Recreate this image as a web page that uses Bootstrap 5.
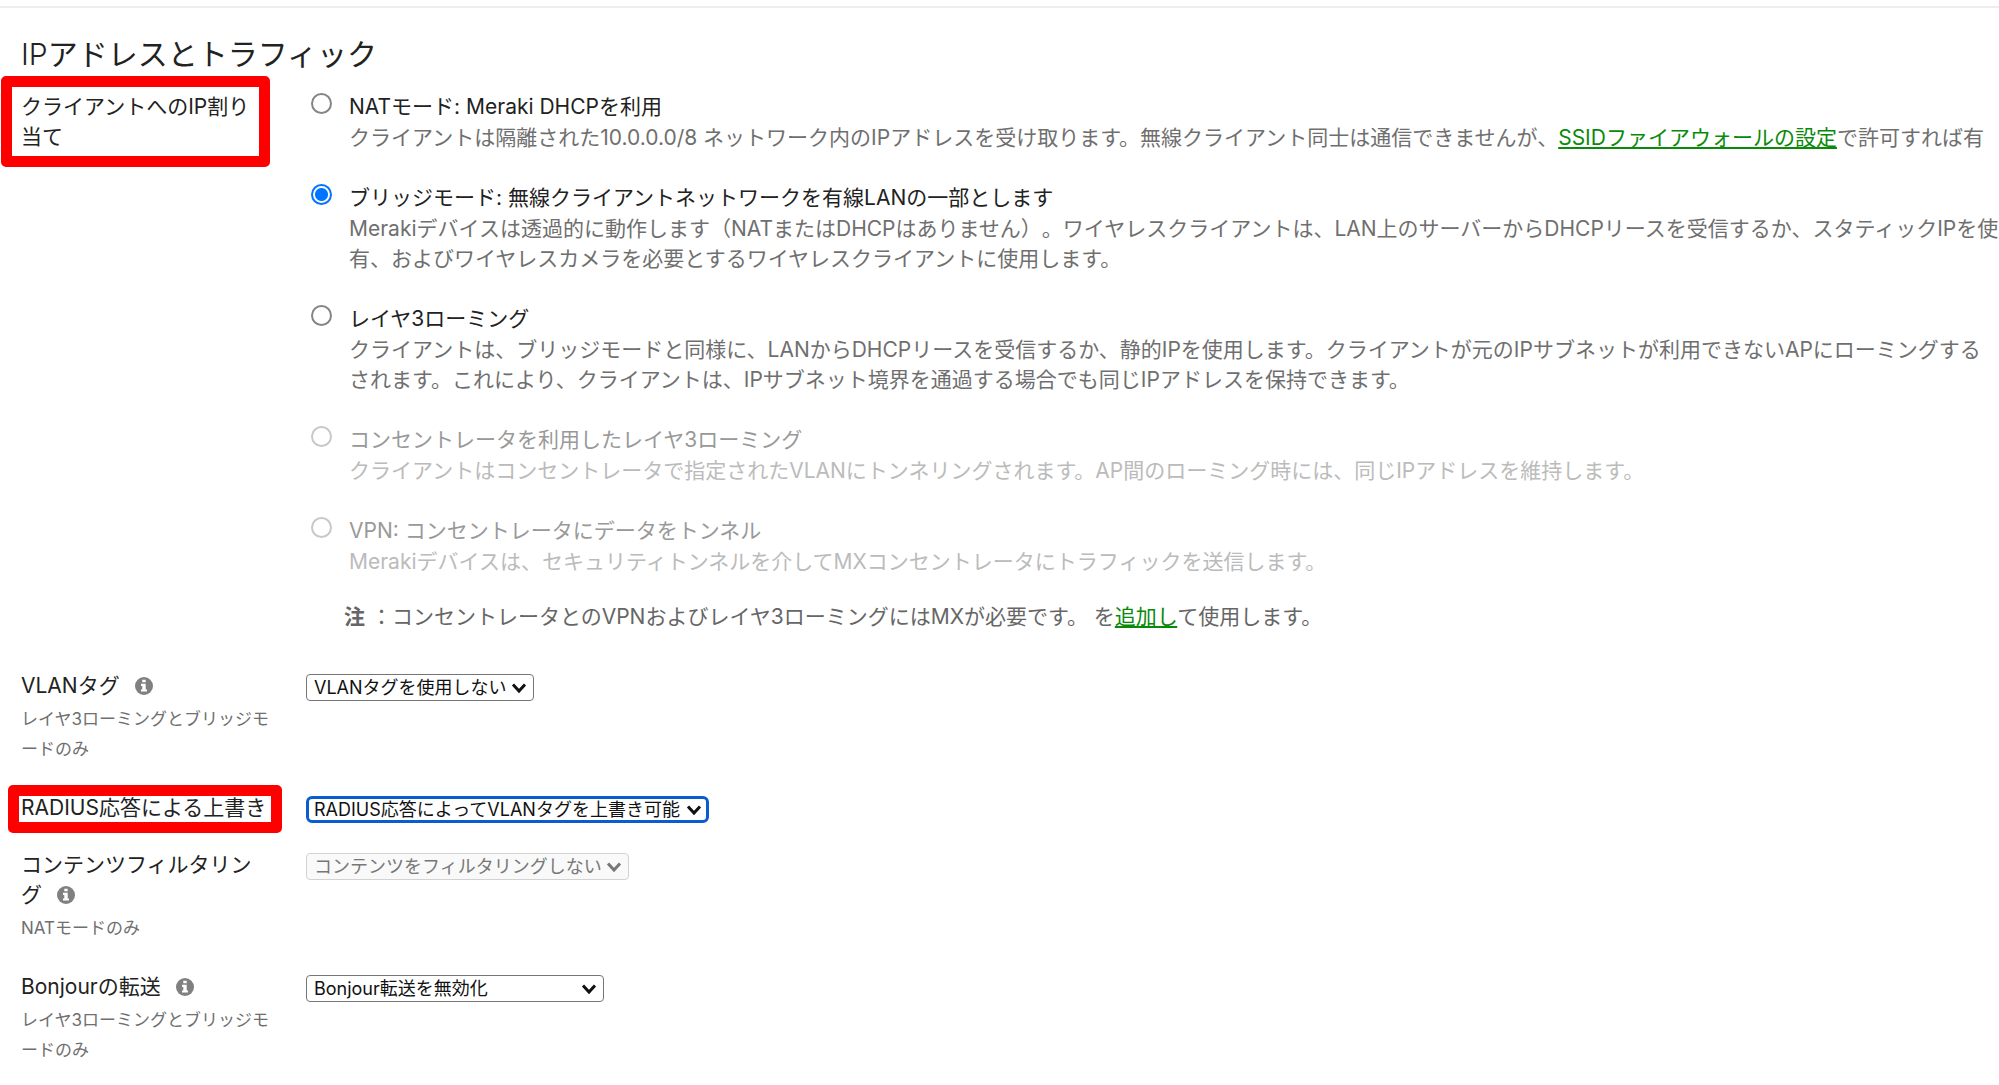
<!DOCTYPE html>
<html lang="ja">
<head>
<meta charset="utf-8">
<meta name="viewport" content="width=device-width, initial-scale=1">
<title>IPアドレスとトラフィック</title>
<link href="https://cdn.jsdelivr.net/npm/bootstrap@5.3.0/dist/css/bootstrap.min.css" rel="stylesheet">
<style>
  body { font-family: Inter, "Noto Sans CJK JP", sans-serif; font-size: 21px; line-height: 30px; color: #222; background: #fff; overflow-x: hidden; text-spacing-trim: space-all; }
  .page-body { border-top: 2px solid #eee; margin-top: 6px; padding: 26px 0 0 21px; }
  .section-title { font-size: 30px; font-weight: 400; line-height: 40px; margin: 0 0 18px; }
  .setting { gap: 36px; margin-bottom: 27px; }
  .setting-name { width: 249px; line-break: anywhere; word-break: break-all; }
  .hint { font-size: 17px; color: #6f6f6f; margin: 3px 0 2px; }
  .marked::after { content: ""; position: absolute; border: 11px solid #f00; border-radius: 5px; pointer-events: none; }
  .marked-block::after { inset: -16px 0 -15px -20px; }
  .marked-line::after { inset: -8px -12px -10px -13px; }
  .info-icon { width: 18px; height: 18px; margin-left: 15px; vertical-align: -2px; }
  .choices { padding-left: 5px; }
  .choice { padding-left: 38px; margin-bottom: 30px; min-height: 0; white-space: nowrap; }
  .choice .form-check-input { width: 21px; height: 21px; margin: 1px 0 0 -38px; border: 2px solid #858585; background-color: #fff; }
  .choice .form-check-input:checked { border-color: #0075ff; background-image: radial-gradient(circle, #0075ff 6px, #fff 7px); }
  .choice .form-check-input:disabled { border-color: #c8c8c8; opacity: 1; }
  .choice .form-check-label { display: block; }
  .choice p { color: #6f6f6f; margin: 1px 0 0; }
  .choice .form-check-input:disabled ~ .form-check-label { color: #999; opacity: 1; }
  .choice .form-check-input:disabled ~ p { color: #bbb; }
  .note { color: #666; margin: -5px 0 0 33px; }
  .green-link { color: #0a8a0a; text-decoration: underline; }
  .vlan-row { padding-top: 12px; }
  .picker { appearance: none; font-size: 18px; line-height: 24px; height: 27px; margin-top: 3px; padding: 0 26px 0 7px; border: 1px solid #767676; border-radius: 4px; color: #111; background: #fff url("data:image/svg+xml,%3Csvg xmlns='http://www.w3.org/2000/svg' viewBox='0 0 16 12'%3E%3Cpath d='M2 2.5 8 9l6-6.5' fill='none' stroke='%23111' stroke-width='3'/%3E%3C/svg%3E") no-repeat right 6px center / 16px 12px; }
  .picker.is-current { border: 3px solid #0b5cce; border-radius: 6px; padding: 0 24px 0 5px; line-height: 20px; background-position: right 4px center; outline: 0; }
  .picker:disabled { color: #777; border-color: #d2d2d2; background-color: #f9f9f9; opacity: 1; background-image: url("data:image/svg+xml,%3Csvg xmlns='http://www.w3.org/2000/svg' viewBox='0 0 16 12'%3E%3Cpath d='M2 2.5 8 9l6-6.5' fill='none' stroke='%23777' stroke-width='3'/%3E%3C/svg%3E"); }
  .picker-wide { width: 298px; }
</style>
<script src="https://cdn.jsdelivr.net/npm/bootstrap@5.3.0/dist/js/bootstrap.bundle.min.js"></script>
</head>
<body>
<svg class="d-none" xmlns="http://www.w3.org/2000/svg">
  <symbol id="info" viewBox="0 0 18 18">
    <circle cx="9" cy="9" r="9" fill="#808080"/>
    <path d="M7.3 2.7h3.4v2.6H7.3zM6 6.8h4.7v5.6H12v2.1H6v-2.1h1.3V8.9H6z" fill="#fff"/>
  </symbol>
</svg>
<main class="page-body">
  <h1 class="section-title"><span class="fw-light">IP</span>アドレスとトラフィック</h1>

  <div class="setting d-flex align-items-start">
    <div class="setting-name flex-shrink-0 position-relative marked marked-block" id="ip-label">クライアントへのIP割り当て</div>
    <div class="choices flex-grow-1" role="radiogroup" aria-labelledby="ip-label">
      <div class="choice form-check">
        <input class="form-check-input" type="radio" name="ip" id="nat">
        <label class="form-check-label" for="nat">NATモード: Meraki DHCPを利用</label>
        <p>クライアントは隔離された10.0.0.0/8 ネットワーク内のIPアドレスを受け取ります。無線クライアント同士は通信できませんが、<a class="green-link" href="#">SSIDファイアウォールの設定</a>で許可すれば有</p>
      </div>
      <div class="choice form-check">
        <input class="form-check-input" type="radio" name="ip" id="bridge" checked>
        <label class="form-check-label" for="bridge">ブリッジモード: 無線クライアントネットワークを有線LANの一部とします</label>
        <p>Merakiデバイスは透過的に動作します（NATまたはDHCPはありません）。ワイヤレスクライアントは、LAN上のサーバーからDHCPリースを受信するか、スタティックIPを使<br>有、およびワイヤレスカメラを必要とするワイヤレスクライアントに使用します。</p>
      </div>
      <div class="choice form-check">
        <input class="form-check-input" type="radio" name="ip" id="l3">
        <label class="form-check-label" for="l3">レイヤ3ローミング</label>
        <p>クライアントは、ブリッジモードと同様に、LANからDHCPリースを受信するか、静的IPを使用します。クライアントが元のIPサブネットが利用できないAPにローミングする<br>されます。これにより、クライアントは、IPサブネット境界を通過する場合でも同じIPアドレスを保持できます。</p>
      </div>
      <div class="choice form-check">
        <input class="form-check-input" type="radio" name="ip" id="l3c" disabled>
        <label class="form-check-label" for="l3c">コンセントレータを利用したレイヤ3ローミング</label>
        <p>クライアントはコンセントレータで指定されたVLANにトンネリングされます。AP間のローミング時には、同じIPアドレスを維持します。</p>
      </div>
      <div class="choice form-check">
        <input class="form-check-input" type="radio" name="ip" id="vpn" disabled>
        <label class="form-check-label" for="vpn">VPN: コンセントレータにデータをトンネル</label>
        <p>Merakiデバイスは、セキュリティトンネルを介してMXコンセントレータにトラフィックを送信します。</p>
      </div>
      <p class="note text-nowrap"><strong>注</strong> ：コンセントレータとのVPNおよびレイヤ3ローミングにはMXが必要です。 を<a class="green-link" href="#">追加し</a>て使用します。</p>
    </div>
  </div>

  <div class="setting vlan-row d-flex align-items-start">
    <div class="setting-name flex-shrink-0">
      <label for="vlan">VLANタグ</label><svg class="info-icon" aria-hidden="true"><use href="#info"/></svg>
      <p class="hint">レイヤ3ローミングとブリッジモードのみ</p>
    </div>
    <select class="picker" id="vlan"><option>VLANタグを使用しない</option></select>
  </div>

  <div class="setting d-flex align-items-start">
    <div class="setting-name flex-shrink-0 position-relative marked marked-line"><label class="text-nowrap" for="radius">RADIUS応答による上書き</label></div>
    <select class="picker is-current" id="radius"><option>RADIUS応答によってVLANタグを上書き可能</option></select>
  </div>

  <div class="setting d-flex align-items-start">
    <div class="setting-name flex-shrink-0">
      <label class="d-inline" for="filter">コンテンツフィルタリング</label><svg class="info-icon" aria-hidden="true"><use href="#info"/></svg>
      <p class="hint">NATモードのみ</p>
    </div>
    <select class="picker" id="filter" disabled><option>コンテンツをフィルタリングしない</option></select>
  </div>

  <div class="setting d-flex align-items-start mb-0">
    <div class="setting-name flex-shrink-0">
      <label for="bonjour">Bonjourの転送</label><svg class="info-icon" aria-hidden="true"><use href="#info"/></svg>
      <p class="hint">レイヤ3ローミングとブリッジモードのみ</p>
    </div>
    <select class="picker picker-wide" id="bonjour"><option>Bonjour転送を無効化</option></select>
  </div>
</main>
</body>
</html>
